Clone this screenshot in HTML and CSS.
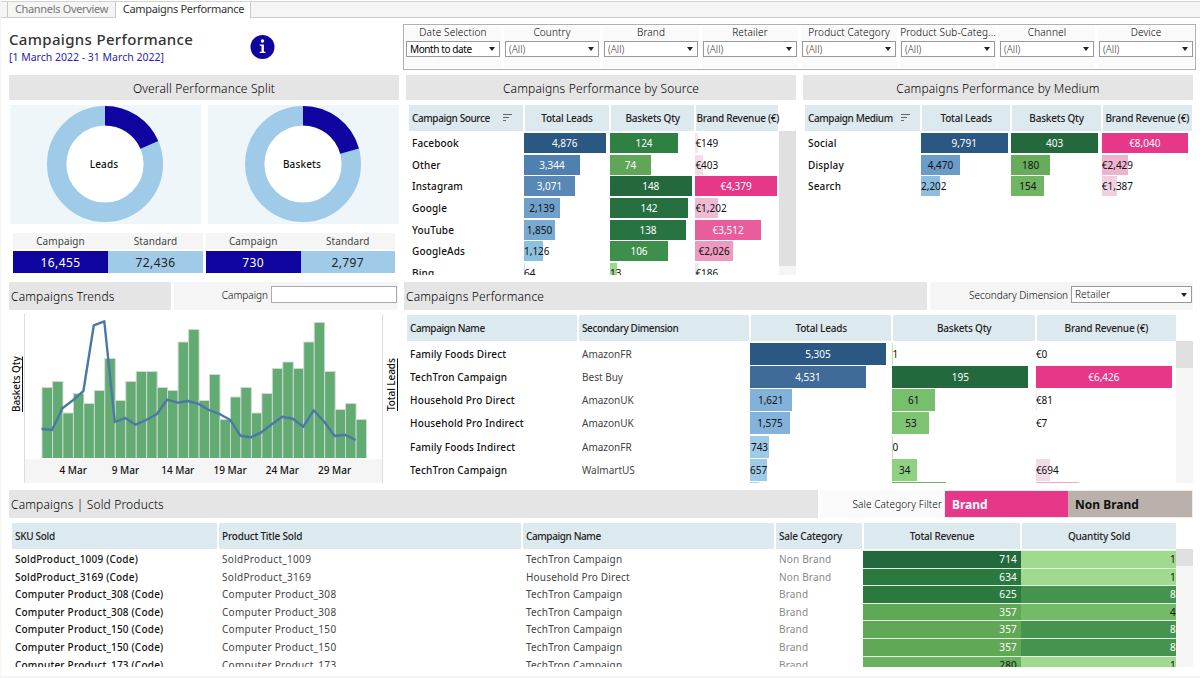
FILE: index.html
```html
<!DOCTYPE html>
<html lang="en">
<head>
  <meta charset="UTF-8" />
  <meta name="viewport" content="width=device-width, initial-scale=1.0"/>
  <title>Campaigns Performance</title>
  <link rel="stylesheet" href="styles.css">
</head>
<body>
  <nav class="tabs">
    <a class="tab">Channels Overview</a>
    <a class="tab active">Campaigns Performance</a>
  </nav>

  <main class="dashboard">
    <header class="top">
      <div class="heading">
        <h1>Campaigns Performance</h1>
        <p>[1 March 2022 - 31 March 2022]</p>
      </div>
      <svg class="info" width="24" height="24" viewBox="0 0 24 24">
        <circle cx="12" cy="12" r="12" fill="#1004a0"/>
        <circle cx="12" cy="6" r="1.7" fill="#fff"/>
        <path d="M9.3 9.4h4.1v7.4h1.6v1.2H9.2v-1.2h1.8v-6.1H9.3z" fill="#fff"/>
      </svg>
      <div class="filters">
        <div class="filter dark"><label>Date Selection</label><div class="select">Month to date</div></div>
        <div class="filter"><label>Country</label><div class="select">(All)</div></div>
        <div class="filter"><label>Brand</label><div class="select">(All)</div></div>
        <div class="filter"><label>Retailer</label><div class="select">(All)</div></div>
        <div class="filter"><label>Product Category</label><div class="select">(All)</div></div>
        <div class="filter"><label>Product Sub-Categ...</label><div class="select">(All)</div></div>
        <div class="filter"><label>Channel</label><div class="select">(All)</div></div>
        <div class="filter"><label>Device</label><div class="select">(All)</div></div>
      </div>
    </header>

    <div class="row overview">
      <section class="split">
        <h2 class="title center">Overall Performance Split</h2>
        <div class="donuts">
          <div class="donut">
            <svg width="116" height="116" viewBox="0 0 116 116">
              <circle cx="58" cy="58" r="48.3" fill="#fff" stroke="#9fcae8" stroke-width="19.4"/>
              <circle cx="58" cy="58" r="48.3" fill="none" stroke="#1004a0" stroke-width="19.4" pathLength="100" stroke-dasharray="18.51 100" transform="rotate(-90 58 58)"/>
            </svg>
            <span>Leads</span>
          </div>
          <div class="donut">
            <svg width="116" height="116" viewBox="0 0 116 116">
              <circle cx="58" cy="58" r="48.3" fill="#fff" stroke="#9fcae8" stroke-width="19.4"/>
              <circle cx="58" cy="58" r="48.3" fill="none" stroke="#1004a0" stroke-width="19.4" pathLength="100" stroke-dasharray="20.7 100" transform="rotate(-90 58 58)"/>
            </svg>
            <span>Baskets</span>
          </div>
        </div>
        <div class="totals">
          <div class="total">
            <span>Campaign</span><span>Standard</span>
            <b class="navy">16,455</b><b class="sky">72,436</b>
          </div>
          <div class="total">
            <span>Campaign</span><span>Standard</span>
            <b class="navy">730</b><b class="sky">2,797</b>
          </div>
        </div>
      </section>

      <section class="source">
        <h2 class="title center">Campaigns Performance by Source</h2>
        <div class="table" id="source">
          <div class="tr head">
            <span>Campaign Source <i class="sort"></i></span><span>Total Leads</span><span>Baskets Qty</span><span>Brand Revenue (€)</span>
          </div>
          <div class="body"></div>
        </div>
      </section>

      <section class="medium">
        <h2 class="title center">Campaigns Performance by Medium</h2>
        <div class="table" id="medium">
          <div class="tr head">
            <span>Campaign Medium <i class="sort"></i></span><span>Total Leads</span><span>Baskets Qty</span><span>Brand Revenue (€)</span>
          </div>
          <div class="body"></div>
        </div>
      </section>
    </div>

    <div class="row details">
      <section class="trends">
        <div class="bar-title">
          <h2 class="title">Campaigns Trends</h2>
          <div class="control"><label>Campaign</label><input type="text"></div>
        </div>
        <div class="chart">
          <span class="axis">Baskets Qty</span>
          <div class="plot">
            <svg id="trend" width="357" height="144" viewBox="0 0 357 144"></svg>
            <div class="dates">
              <span>4 Mar</span><span>9 Mar</span><span>14 Mar</span><span>19 Mar</span><span>24 Mar</span><span>29 Mar</span>
            </div>
          </div>
          <span class="axis right">Total Leads</span>
        </div>
      </section>

      <section class="campaigns">
        <div class="bar-title">
          <h2 class="title">Campaigns Performance</h2>
          <div class="control"><label>Secondary Dimension</label><div class="select">Retailer</div></div>
        </div>
        <div class="table" id="campaigns">
          <div class="tr head">
            <span>Campaign Name</span><span>Secondary Dimension</span><span>Total Leads</span><span>Baskets Qty</span><span>Brand Revenue (€)</span>
          </div>
          <div class="body"></div>
        </div>
      </section>
    </div>

    <section class="products">
      <div class="bar-title">
        <h2 class="title">Campaigns | Sold Products</h2>
        <label class="sale">Sale Category Filter</label>
        <div class="toggle"><button class="brand">Brand</button><button class="non-brand">Non Brand</button></div>
      </div>
      <div class="table" id="products">
        <div class="tr head">
          <span>SKU Sold</span><span>Product Title Sold</span><span>Campaign Name</span><span>Sale Category</span><span>Total Revenue</span><span>Quantity Sold</span>
        </div>
        <div class="body"></div>
      </div>
    </section>
  </main>

  <script src="script.js"></script>
</body>
</html>
```
FILE: styles.css
```css
* {
  box-sizing: border-box;
}
body {
  margin: 0;
  width: 1200px;
  height: 678px;
  overflow: hidden;
  font-family: "Noto Sans", sans-serif;
  font-size: 10px;
  color: #111;
  background-color: white;
  border-left: 1px solid #f5f5f5;
  border-bottom: 2px solid #f5f5f5;
}
h1, h2, p {
  margin: 0;
  font-weight: normal;
}

/* tabs */
.tabs {
  display: flex;
  height: 17px;
  margin-top: 1px;
  padding-left: 6px;
  background-color: #f5f5f5;
  border-top: 1px solid #d4d4d4;
  border-bottom: 1px solid #cfcfcf;
}
.tab {
  height: 15px;
  line-height: 14px;
  width: 109px;
  text-align: center;
  font-size: 11px;
  letter-spacing: -0.32px;
  color: #777;
  border-left: 1px solid #c8c8c8;
  border-right: 1px solid #c8c8c8;
  white-space: nowrap;
}
.tab.active {
  width: 135px;
  height: 16px;
  padding-left: 1px;
  border-left: none;
  background-color: white;
  color: #333;
}

/* heading and filters */
.dashboard {
  padding-left: 8px;
}
.top {
  display: flex;
  height: 57px;
}
.heading {
  width: 241px;
  padding-top: 11px;
  white-space: nowrap;
}
.heading h1 {
  font-size: 15px;
  line-height: 21px;
  font-weight: 500;
  letter-spacing: 0.33px;
  color: #333;
}
.heading p {
  font-size: 10.5px;
  line-height: 15px;
  color: #2a1fae;
}
.info {
  margin-top: 17px;
  width: 25px;
}
.filters {
  display: flex;
  gap: 3px;
  width: 793px;
  height: 46px;
  margin: 6px 0 0 128px;
  padding: 1px 0 1px 1px;
  border: 1px solid #b0b0b0;
}
.filter {
  width: 96px;
  background-color: #fafafa;
}
.filter label {
  display: block;
  height: 15px;
  line-height: 13px;
  text-align: center;
  font-size: 10px;
  font-weight: 300;
  letter-spacing: 0.15px;
  color: #000;
  white-space: nowrap;
}
.filter .select {
  width: 94px;
  margin-left: 1px;
}
.filter.dark .select {
  letter-spacing: -0.4px;
  font-weight: 400;
  color: #000;
}
.select {
  display: flex;
  align-items: center;
  justify-content: space-between;
  height: 16px;
  padding: 0 4px 0 3px;
  border: 1px solid #999;
  background-color: white;
  font-size: 10px;
  font-weight: 300;
  color: #333;
}
.select::after {
  content: "";
  border: 3px solid transparent;
  border-top: 4px solid #222;
  border-bottom: none;
}

/* section titles */
.title {
  height: 25px;
  line-height: 27px;
  font-size: 12px;
  font-weight: 350;
  letter-spacing: 0.16px;
  color: #000;
  background-color: #e5e5e5;
}
.title.center {
  text-align: center;
}
.bar-title {
  display: flex;
  gap: 3px;
  height: 28px;
}
.bar-title .title {
  height: 28px;
  line-height: 30px;
  padding-left: 2px;
}
.control {
  display: flex;
  justify-content: flex-end;
  gap: 3px;
  padding: 4px 1px 0 0;
  background-color: #f5f5f5;
  line-height: 19px;
}
.control label {
  letter-spacing: 0;
}
.control label, .sale {
  font-weight: 300;
  color: #000;
}
.control input {
  width: 126px;
  height: 17px;
  padding: 0;
  border: 1px solid #aaa;
}
.control .select {
  width: 121px;
  height: 17px;
  letter-spacing: 0.1px;
  color: #000;
}
.row {
  display: flex;
}
.overview {
  height: 207px;
}
.details {
  height: 208px;
}

/* donuts */
.split {
  width: 390px;
  margin-right: 7px;
}
.donuts {
  display: flex;
  gap: 7px;
  margin: 5px 0 0 1px;
}
.donut {
  position: relative;
  width: 191px;
  height: 119px;
  padding: 1px 0 0 37px;
  background-color: #eef6fa;
}
.donut span {
  position: absolute;
  left: 0;
  width: 188px;
  top: 52px;
  line-height: 14px;
  text-align: center;
  font-weight: 500;
  letter-spacing: 0.15px;
}
.totals {
  display: flex;
  gap: 3px;
  margin: 9px 0 0 4px;
}
.total {
  display: grid;
  grid-template-columns: 1fr 1fr;
  grid-template-rows: 16px 22px;
  row-gap: 2px;
  width: 190px;
  text-align: center;
  line-height: 17px;
  letter-spacing: 0.1px;
  color: #444;
}
.total:last-child {
  width: 189px;
}
.total span {
  background-color: #f5f5f5;
}
.total b {
  font-size: 12px;
  line-height: 23px;
  font-weight: 400;
  letter-spacing: 0.4px;
}
.navy {
  background-color: #1004a0;
  color: white;
}
.sky {
  background-color: #9fcae8;
  color: #222;
}

/* tables */
.source {
  width: 390px;
  margin-right: 7px;
}
.medium {
  width: 390px;
}
.table {
  margin-top: 5px;
}
.tr {
  display: grid;
}
.head {
  height: 26px;
  line-height: 26px;
  font-size: 10px;
  font-weight: 500;
  letter-spacing: -0.2px;
  color: #222;
  text-align: center;
  white-space: nowrap;
}
.head span {
  margin: 0 1px;
  background-color: #dce9ef;
}
.head span:first-child {
  text-align: left;
  padding-left: 3px;
  letter-spacing: -0.4px;
}
.sort {
  display: inline-block;
  width: 9px;
  height: 8px;
  margin-left: 11px;
  background:
    linear-gradient(#666, #666) 0 0 / 9px 1px no-repeat,
    linear-gradient(#666, #666) 0 3px / 6px 1px no-repeat,
    linear-gradient(#666, #666) 0 6px / 3px 1px no-repeat;
}
#medium .sort {
  margin-left: 6px;
}
.body {
  position: relative;
  overflow: hidden;
  padding-top: 1px;
}
.name {
  padding-left: 4px;
  font-weight: 500;
  letter-spacing: 0.15px;
  white-space: nowrap;
}
.bar {
  display: flex;
  justify-content: safe center;
  white-space: nowrap;
}
.light {
  color: white;
}
.scroll {
  position: absolute;
  top: 0;
  right: 0;
  width: 17px;
  height: 100%;
  background-color: #f5f5f5;
}
.scroll div {
  background-color: #e0e0e0;
}

#source {
  padding-left: 2px;
}
#medium {
  padding-left: 1px;
}
#source .tr {
  grid-template-columns: 116px 86px 85.4px 84px;
}
#source .head span:last-child {
  letter-spacing: -0.25px;
}
#medium .tr {
  grid-template-columns: 117px 90.4px 90.4px 91px;
}
#source .body, #medium .body {
  height: 144px;
}
#source .body .tr, #medium .body .tr {
  height: 21.65px;
  line-height: 22.5px;
}
#source .bar, #medium .bar {
  height: 20px;
  margin-top: 1px;
  line-height: 20px;
}

#campaigns {
  padding-left: 2px;
}
#campaigns .tr {
  grid-template-columns: 172px 172px 142.4px 143.5px 141px;
}
#campaigns .head span:nth-child(2) {
  text-align: left;
  padding-left: 3px;
  letter-spacing: -0.4px;
}
#campaigns .body {
  height: 142px;
}
#campaigns .body .tr {
  height: 23.15px;
  line-height: 24px;
}
#campaigns .bar {
  height: 22px;
  margin-top: 1px;
  line-height: 22px;
}
.dim {
  padding-left: 4px;
  color: #444;
}

/* trends */
.trends {
  width: 389px;
  margin-right: 6px;
}
.trends .title {
  width: 162px;
}
.trends .control {
  width: 224px;
}
.chart {
  display: flex;
  margin-top: 4px;
}
.axis {
  width: 15px;
  height: 141px;
  writing-mode: vertical-rl;
  transform: rotate(180deg);
  text-align: center;
  line-height: 15px;
  letter-spacing: -0.1px;
  font-weight: 500;
  text-decoration: underline;
}
.axis.right {
  margin-left: 1px;
}
.plot {
  width: 359px;
  height: 169px;
  border-left: 1px solid #ddd;
  border-right: 1px solid #ddd;
}
.plot svg {
  display: block;
}
.dates {
  display: flex;
  height: 24px;
  margin-top: 1px;
  padding-left: 22px;
  line-height: 23px;
  background-color: #f5f5f5;
  font-weight: 500;
}
.dates span {
  width: 52.3px;
  text-align: center;
}
.campaigns {
  width: 789px;
}
.campaigns .title {
  width: 523px;
}
.campaigns .control {
  width: 263px;
}

/* products */
.products {
  width: 1184px;
}
.products .title {
  width: 809px;
}
.sale {
  width: 122px;
  padding-right: 1px;
  text-align: right;
  line-height: 29px;
  letter-spacing: 0.1px;
  background-color: #fafafa;
  white-space: nowrap;
}
.toggle {
  display: flex;
  height: 28px;
  margin-left: -2px;
  border: 1px solid #eee;
}
.toggle button {
  width: 123.5px;
  padding: 0 0 0 7px;
  border: none;
  text-align: left;
  font-family: inherit;
  font-size: 12px;
  font-weight: bold;
}
.brand {
  color: white;
  background-color: #e73788;
}
.toggle .brand {
  width: 123px;
}
.non-brand {
  color: #111;
  background-color: #bab0ac;
}
#products {
  padding-left: 2px;
}
#products .tr {
  grid-template-columns: 207px 304px 253px 88px 158px 156px;
}
#products .head span:nth-child(-n+4) {
  text-align: left;
  padding-left: 3px;
}
#products .head span:nth-child(3) {
  letter-spacing: -0.4px;
}
#products .head span:first-child {
  letter-spacing: -0.3px;
}
#products .body {
  height: 118px;
}
#products .body .tr {
  height: 17.6px;
  line-height: 18.8px;
}
#products .name {
  letter-spacing: 0.2px;
}
#products .cell:nth-child(2) {
  letter-spacing: 0.3px;
}
.cell {
  padding-left: 4px;
  letter-spacing: 0.18px;
  color: #444;
  white-space: nowrap;
}
.cell.cat {
  color: #888;
}
.num {
  height: 17.6px;
  padding-right: 4px;
  border-top: 1px solid #e3f2e2;
  line-height: 16.6px;
  letter-spacing: 0.2px;
  text-align: right;
}
.num:last-child {
  padding-right: 1px;
}
```
FILE: script.js
```js
// each bar: [label, width in px, colour, white text]
const source = [
  ["Facebook", ["4,876", 81.5, "#2b5783", 1], ["124", 68, "#2f8143", 1], ["€149", 3, "#f3e6ec"]],
  ["Other", ["3,344", 56, "#4f80b0", 1], ["74", 41, "#5fa756", 1], ["€403", 7.5, "#f2dde7"]],
  ["Instagram", ["3,071", 51, "#5788b6", 1], ["148", 81.5, "#24693d", 1], ["€4,379", 81.5, "#e73788", 1]],
  ["Google", ["2,139", 36, "#6ea0c9"], ["142", 78, "#266f3e", 1], ["€1,202", 22.5, "#efbbd4"]],
  ["YouTube", ["1,850", 31, "#77a9d1"], ["138", 76, "#277440", 1], ["€3,512", 65.5, "#ea5d9d", 1]],
  ["GoogleAds", ["1,126", 19, "#8dbfe0"], ["106", 58, "#3e8f4c", 1], ["€2,026", 37.5, "#ed99c0"]],
  ["Bing", ["64", 1, "#b9ddf1"], ["13", 7, "#9bd889"], ["€186", 3.5, "#f3e5ec"]]
];

const medium = [
  ["Social", ["9,791", 86.5, "#2b5783", 1], ["403", 86.5, "#24693d", 1], ["€8,040", 86, "#e73788", 1]],
  ["Display", ["4,470", 39, "#6b9cc7"], ["180", 38.5, "#66ac5b"], ["€2,429", 26, "#eeb3cf"]],
  ["Search", ["2,202", 19, "#8dbde0"], ["154", 33, "#6fb562"], ["€1,387", 15, "#f0d0e0"]]
];

const campaigns = [
  ["Family Foods Direct", "AmazonFR", ["5,305", 136, "#2b5783", 1], ["1", 1, "#b8e8ac"], ["€0", 0, "#f3e6ec"]],
  ["TechTron Campaign", "Best Buy", ["4,531", 116, "#3f6b98", 1], ["195", 136, "#24693d", 1], ["€6,426", 136, "#e73788", 1]],
  ["Household Pro Direct", "AmazonUK", ["1,621", 41.5, "#82b2d9"], ["61", 42.5, "#77bf6c"], ["€81", 1, "#f3e6ec"]],
  ["Household Pro Indirect", "AmazonUK", ["1,575", 40, "#83b3da"], ["53", 37, "#7ec473"], ["€7", 0, "#f3e6ec"]],
  ["Family Foods Indirect", "AmazonFR", ["743", 19, "#9ecae8"], ["0", 1, "#b8e8ac"], ["", 0, "#fff"]],
  ["TechTron Campaign", "WalmartUS", ["657", 17, "#9fcbe8"], ["34", 24.5, "#8fd180"], ["€694", 14, "#f0dbe6"]],
  ["", "", ["", 9, "#a9d3ed"], ["", 54, "#6bb35f"], ["", 43, "#f0a8cc"]]
];

const products = [
  ["SoldProduct_1009 (Code)", "SoldProduct_1009", "TechTron Campaign", "Non Brand", ["714", "#24693d", 1], ["1", "#a0da8e"]],
  ["SoldProduct_3169 (Code)", "SoldProduct_3169", "Household Pro Direct", "Non Brand", ["634", "#2a7a40", 1], ["1", "#a0da8e"]],
  ["Computer Product_308 (Code)", "Computer Product_308", "TechTron Campaign", "Brand", ["625", "#2a7a40", 1], ["8", "#469350", 1]],
  ["Computer Product_308 (Code)", "Computer Product_308", "TechTron Campaign", "Brand", ["357", "#60a856", 1], ["4", "#73bb68"]],
  ["Computer Product_150 (Code)", "Computer Product_150", "TechTron Campaign", "Brand", ["357", "#60a856", 1], ["8", "#469350", 1]],
  ["Computer Product_150 (Code)", "Computer Product_150", "TechTron Campaign", "Brand", ["357", "#60a856", 1], ["8", "#469350", 1]],
  ["Computer Product_173 (Code)", "Computer Product_173", "TechTron Campaign", "Brand", ["280", "#6bb260"], ["1", "#a0da8e"]]
];

function bar(b) {
  return `<div><div class="bar ${b[3] ? "light" : ""}" style="width:${b[1]}px;background:${b[2]}">${b[0]}</div></div>`;
}

function fill(id, rows, thumb) {
  let html = rows.map(r => '<div class="tr">' + r.join("") + "</div>").join("");
  if (thumb) html += `<div class="scroll"><div style="height:${thumb}px"></div></div>`;
  document.querySelector("#" + id + " .body").innerHTML = html;
}

const name = t => `<div class="name">${t}</div>`;
const num = n => `<div class="num ${n[2] ? "light" : ""}" style="background:${n[1]}">${n[0]}</div>`;

fill("source", source.map(r => [name(r[0]), ...r.slice(1).map(bar)]), 135);
fill("medium", medium.map(r => [name(r[0]), ...r.slice(1).map(bar)]));
fill("campaigns", campaigns.map(r => [name(r[0]), `<div class="dim">${r[1]}</div>`, ...r.slice(2).map(bar)]), 27);
fill("products", products.map(r => [
  name(r[0]),
  `<div class="cell">${r[1]}</div>`,
  `<div class="cell">${r[2]}</div>`,
  `<div class="cell cat">${r[3]}</div>`,
  num(r[4]), num(r[5])
]), 17);

// trend chart, one value per day of March
const baskets = [70.5, 76.5, 45, 64.5, 54.5, 67.5, 99.5, 57.5, 76.5, 86.5, 86.5, 70.5, 67.5, 116, 128.5, 57.5, 83.5, 38.5, 61, 70.5, 45, 64.5, 89.5, 96, 89.5, 116, 135.5, 86.5, 48.5, 54.5, 38.5];
const leads = [29.3, 28, 49.7, 57.7, 67, 132.7, 136.7, 36, 40, 33.3, 38, 43.7, 58.3, 55.3, 57, 54, 48, 44, 38.3, 22.3, 20.7, 25.7, 33.7, 41.3, 39.3, 31.3, 47.7, 36.3, 22, 23.3, 18];
const step = 10.47;
let chart = "";
baskets.forEach((v, i) => {
  chart += `<rect x="${(17 + i * step).toFixed(1)}" y="${144 - v}" width="${step}" height="${v + 2}" fill="#62ab73" stroke="#d5d9d5" stroke-width="0.9"/>`;
});
chart += `<polyline fill="none" stroke="#4c78a8" stroke-width="2.4" stroke-linejoin="round" points="${leads.map((v, i) => (16.5 + i * step).toFixed(1) + "," + (144 - v)).join(" ")}"/>`;
document.getElementById("trend").innerHTML = chart;
```
